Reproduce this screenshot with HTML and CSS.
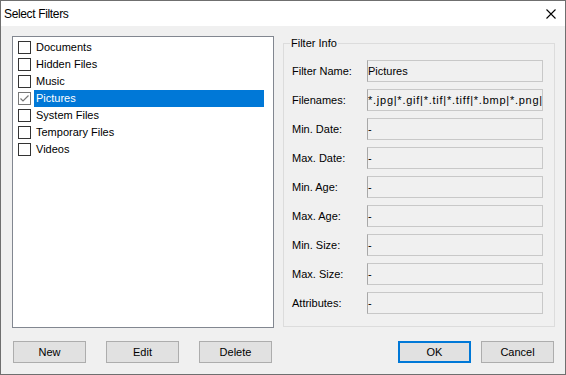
FILE: index.html
```html
<!DOCTYPE html>
<html lang="en">
<head>
    <meta charset="UTF-8">
    <meta name="viewport" content="width=device-width, initial-scale=1.0">
    <title>Select Filters</title>
    <link rel="stylesheet" href="styles.css">
</head>
<body>
    <div class="window">
        <div class="titlebar">
            <span class="title">Select Filters</span>
            <svg class="close" width="10" height="10" viewBox="0 0 10 10">
                <path d="M0.5 0.5 L9.5 9.5 M9.5 0.5 L0.5 9.5" stroke="#000" stroke-width="1.1" fill="none"/>
            </svg>
        </div>
        <div class="content">
            <div class="main">
                <div class="list">
                    <div class="item"><span class="check"></span><span class="label">Documents</span></div>
                    <div class="item"><span class="check"></span><span class="label">Hidden Files</span></div>
                    <div class="item"><span class="check"></span><span class="label">Music</span></div>
                    <div class="item selected">
                        <span class="check checked">
                            <svg width="11" height="11" viewBox="0 0 11 11">
                                <path d="M1.5 5.5 L4 8 L9.5 2.5" stroke="#777" stroke-width="1.2" fill="none"/>
                            </svg>
                        </span>
                        <span class="label">Pictures</span>
                    </div>
                    <div class="item"><span class="check"></span><span class="label">System Files</span></div>
                    <div class="item"><span class="check"></span><span class="label">Temporary Files</span></div>
                    <div class="item"><span class="check"></span><span class="label">Videos</span></div>
                </div>
                <div class="group">
                    <span class="group-title">Filter Info</span>
                    <div class="fields">
                        <div class="field-label">Filter Name:</div>
                        <div class="field-box">Pictures</div>
                        <div class="field-label">Filenames:</div>
                        <div class="field-box wide">*.jpg|*.gif|*.tif|*.tiff|*.bmp|*.png|*.ico</div>
                        <div class="field-label">Min. Date:</div>
                        <div class="field-box">-</div>
                        <div class="field-label">Max. Date:</div>
                        <div class="field-box">-</div>
                        <div class="field-label">Min. Age:</div>
                        <div class="field-box">-</div>
                        <div class="field-label">Max. Age:</div>
                        <div class="field-box">-</div>
                        <div class="field-label">Min. Size:</div>
                        <div class="field-box">-</div>
                        <div class="field-label">Max. Size:</div>
                        <div class="field-box">-</div>
                        <div class="field-label">Attributes:</div>
                        <div class="field-box">-</div>
                    </div>
                </div>
            </div>
            <div class="buttons">
                <div class="button-group left">
                    <button>New</button>
                    <button>Edit</button>
                    <button>Delete</button>
                </div>
                <div class="button-group right">
                    <button class="default">OK</button>
                    <button>Cancel</button>
                </div>
            </div>
        </div>
    </div>
</body>
</html>
```

FILE: styles.css
```css
html, body {
    margin: 0;
    padding: 0;
}
body {
    font-family: 'Liberation Sans', Arial, sans-serif;
    font-size: 11px;
    color: #000;
    background-color: #f0f0f0;
}
.window {
    width: 566px;
    height: 375px;
    box-sizing: border-box;
    border: 1px solid #6f6f6f;
    background-color: #f0f0f0;
    display: flex;
    flex-direction: column;
}
.titlebar {
    height: 25px;
    background-color: white;
    display: flex;
    align-items: center;
    justify-content: space-between;
    padding: 0 9px 0 3px;
}
.title {
    font-size: 12px;
    letter-spacing: -0.35px;
}
.close {
    display: block;
}
.content {
    flex: 1;
    padding: 10px 10px 0 11px;
}
.main {
    display: flex;
    gap: 9px;
    height: 292px;
}
.list {
    width: 262px;
    box-sizing: border-box;
    border: 1px solid #828790;
    background-color: white;
    padding: 2px 0 0 5px;
}
.item {
    display: flex;
    align-items: center;
    height: 17px;
}
.check {
    width: 13px;
    height: 13px;
    box-sizing: border-box;
    border: 1px solid #333;
    background-color: white;
    margin-right: 3px;
    display: flex;
    align-items: center;
    justify-content: center;
}
.check.checked {
    border-color: #777;
}
.label {
    line-height: 17px;
    padding-left: 2px;
}
.selected .label {
    width: 228px;
    background-color: #0078d7;
    color: white;
}
.group {
    width: 272px;
    box-sizing: border-box;
    border: 1px solid #dcdcdc;
    margin-top: 7px;
    height: 284px;
    padding: 0 11px 0 8px;
}
.group-title {
    display: block;
    width: max-content;
    margin: -7px 0 0 -2px;
    padding: 0 1px;
    line-height: 13px;
    background-color: #f0f0f0;
}
.fields {
    display: grid;
    grid-template-columns: 75px 176px;
    grid-auto-rows: 22px;
    row-gap: 7px;
    margin-top: 10px;
}
.field-label {
    display: flex;
    align-items: center;
}
.field-box {
    box-sizing: border-box;
    border: 1px solid #c8c8c8;
    border-left-color: #a8a8a8;
    background-color: #f0f0f0;
    line-height: 20px;
    white-space: nowrap;
    overflow: hidden;
}
.field-box.wide {
    letter-spacing: 0.75px;
}
.buttons {
    display: flex;
    justify-content: space-between;
    margin-top: 13px;
    padding-left: 1px;
    padding-right: 1px;
}
.button-group {
    display: flex;
}
.button-group.left {
    gap: 20px;
}
.button-group.right {
    gap: 10px;
}
button {
    width: 73px;
    height: 22px;
    box-sizing: border-box;
    font-family: 'Liberation Sans', Arial, sans-serif;
    font-size: 11px;
    color: #000;
    background-color: #e1e1e1;
    border: 1px solid #adadad;
    border-radius: 0;
    padding: 0;
}
button.default {
    border: 2px solid #0078d7;
}
```
